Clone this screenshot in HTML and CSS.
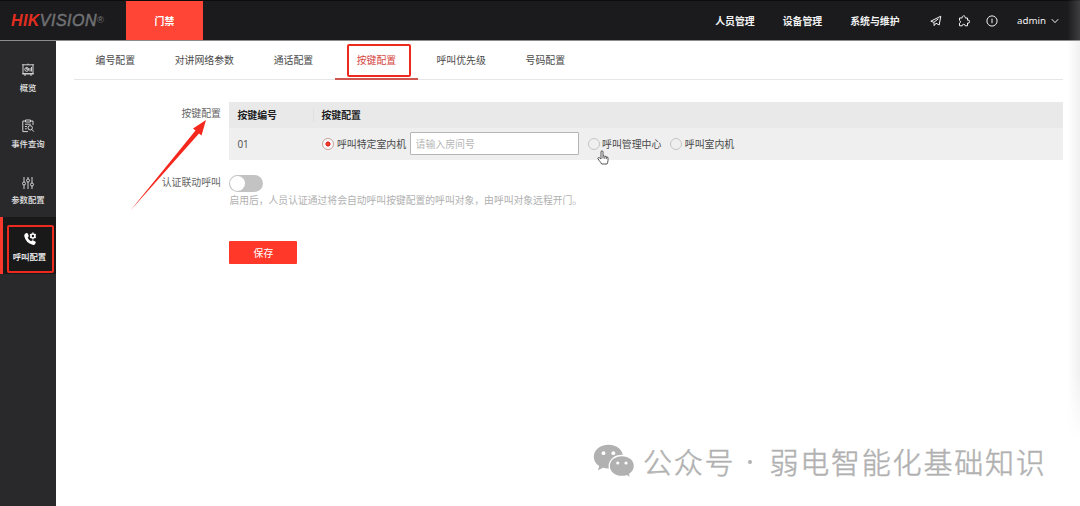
FILE: index.html
```html
<!DOCTYPE html>
<html lang="zh-CN">
<head>
    <meta charset="UTF-8">
    <meta name="viewport" content="width=device-width, initial-scale=1.0">
    <title>按键配置</title>
    <link rel="stylesheet" href="styles.css">
</head>
<body>
    <header class="topbar">
        <div class="logo"><span class="logo-red">HIK</span><span class="logo-grey">VISION</span><sup>®</sup></div>
        <div class="module">门禁</div>
        <nav class="top-nav">
            <a>人员管理</a>
            <a>设备管理</a>
            <a>系统与维护</a>
        </nav>
        <div class="tools">
            <svg viewBox="0 0 12 12"><path d="M.8 6.2 10.8 1.2 9.2 10 6 8.2 4.2 10.6 3.9 7.3Z M3.9 7.3 8.4 3.8"/></svg>
            <svg viewBox="0 0 12 12"><path d="M1.5 3H4.2A1.6 1.6 0 1 1 7.2 3H9.5V5.2A1.5 1.5 0 1 1 9.5 8V10.8H7.2A1.5 1.5 0 0 0 4.2 10.8H1.5V8.2A1.5 1.5 0 0 0 1.5 5.4Z"/></svg>
            <svg viewBox="0 0 12 12"><circle cx="6" cy="6" r="5.1"/><path d="M6 3.6V8.2"/></svg>
        </div>
        <div class="user">admin <svg viewBox="0 0 8 6"><path d="M.8 1.2 4 4.6 7.2 1.2"/></svg></div>
    </header>

    <div class="layout">
        <aside class="sidebar">
            <a class="side-item">
                <svg viewBox="0 0 14 14"><path d="M1 1.8H13M2 1.8V10.8H12V1.8M1 10.8H13M4 11V13M10 11V13M7 .6V1.8M9 5V8.5M10.5 4V8.5"/><circle cx="5.7" cy="6.4" r="1.9"/><path d="M5.7 4.5V6.4H7.6"/></svg>
                <span>概览</span>
            </a>
            <a class="side-item">
                <svg viewBox="0 0 14 14"><path d="M4.5 2H1.8V12.6H7M9.5 2H12V6M4.5 1H9.5V3H4.5ZM4 5.2H9.8M4 7.5H6M4 9.8H5.8"/><circle cx="9.2" cy="8.8" r="2.2"/><path d="M10.8 10.4 12.8 12.6"/></svg>
                <span>事件查询</span>
            </a>
            <a class="side-item">
                <svg viewBox="0 0 14 14"><path d="M3 1V6M3 9V13M7 1V3M7 6V13M11 1V7M11 10V13"/><circle cx="3" cy="7.5" r="1.5"/><circle cx="7" cy="4.5" r="1.5"/><circle cx="11" cy="8.5" r="1.5"/></svg>
                <span>参数配置</span>
            </a>
            <a class="side-item active">
                <svg class="solid" viewBox="0 0 14 14"><path d="M2 1.7 3.5.9Q4.4.8 4.9 1.7L5.7 3.8Q5.8 4.5 5.2 5L4.6 5.6Q5.5 8 8.2 9.2L9 8.5Q9.6 8 10.3 8.4L12.3 9.5Q13 10 12.7 10.8L12 12.2Q11.1 13.2 9.6 12.8Q2.8 10.8 1.3 4.2Q1 2.7 2 1.7Z"/><circle class="gear" cx="9.9" cy="4" r="2"/><path class="teeth" d="M9.9.6V1.6M9.9 6.4V7.4M7 2.3 7.8 2.8M12 5.2 12.8 5.7M7 5.7 7.8 5.2M12 2.8 12.8 2.3"/></svg>
                <span>呼叫配置</span>
                <i class="mark mark-side"></i>
            </a>
        </aside>

        <main class="content">
            <ul class="tabs">
                <li>编号配置</li>
                <li>对讲网络参数</li>
                <li>通话配置</li>
                <li class="active">按键配置<i class="mark mark-tab"></i></li>
                <li>呼叫优先级</li>
                <li>号码配置</li>
            </ul>

            <form class="form">
                <div class="form-row">
                    <label class="form-label">按键配置</label>
                    <div class="key-table">
                        <div class="key-row key-head">
                            <div class="cell-no">按键编号</div>
                            <div class="cell-config">按键配置</div>
                        </div>
                        <div class="key-row">
                            <div class="cell-no">01</div>
                            <div class="cell-config">
                                <span class="radio checked"></span>
                                <span class="radio-text">呼叫特定室内机</span>
                                <input class="room" type="text" placeholder="请输入房间号">
                                <span class="radio">
                                    <svg class="cursor" viewBox="0 0 12 15"><path d="M4 9V2Q4 .8 5 .8T6 2V6Q7.4 5.2 7.8 6.4Q9 5.8 9.4 7Q11 6.4 11 8.2V10.5Q11 12 10 14H4.6Q4 12.5 2.2 10.6L.9 8.6Q.8 7.3 2.2 7.6Z"/><path d="M6 6V8.5M7.8 6.5V8.7M9.4 7V8.9"/></svg>
                                </span>
                                <span class="radio-text">呼叫管理中心</span>
                                <span class="radio"></span>
                                <span class="radio-text">呼叫室内机</span>
                            </div>
                        </div>
                    </div>
                </div>
                <div class="form-row link-row">
                    <label class="form-label">认证联动呼叫</label>
                    <div class="form-field">
                        <span class="switch"></span>
                        <p class="hint">启用后，人员认证通过将会自动呼叫按键配置的呼叫对象，由呼叫对象远程开门。</p>
                    </div>
                </div>
                <button class="save" type="button">保存</button>
            </form>
        </main>
    </div>

    <svg class="arrow" viewBox="0 0 80 94"><path d="M1 92 66.5 11.5 64 9.5 77 1 72.5 16.5 70 14.5Z"/></svg>
    <div class="edge-shade"></div>

    <div class="watermark">
        <svg viewBox="0 0 42 34"><path d="M15.5.8C7 .8.8 6 .8 12.8c0 4 2 7 5.4 9.2L5 26.3l5-2.5q2.6.8 5.5.8C24 24.6 30 19.5 30 12.8S24 .8 15.5.8Z"/><path class="front" d="M29 11.5c-7.500 0-12.800 4.800-12.800 10.600S21.500 32.500 29 32.500q2.300 0 4.500-.7l4.200 2.200-1.100-3.800c3-2 4.800-4.700 4.800-8.100 0-5.800-5-10.600-12.400-10.600Z"/><g class="eyes"><circle cx="10.5" cy="9.2" r="1.9"/><circle cx="20.3" cy="9.2" r="1.9"/><circle cx="24.7" cy="19" r="1.6"/><circle cx="33" cy="19" r="1.6"/></g></svg>
        <span>公众号</span><b></b><span>弱电智能化基础知识</span>
    </div>
</body>
</html>
```
FILE: styles.css
```css
* {
    box-sizing: border-box;
}
body {
    margin: 0;
    height: 506px;
    overflow: hidden;
    position: relative;
    background: #fff;
    color: #4a4a4a;
    font-family: "Open Sans", "Noto Sans CJK SC", sans-serif;
    font-size: 9.9px;
    line-height: 14px;
}
svg {
    display: block;
    fill: none;
    stroke: currentColor;
}

/* top bar */
.topbar {
    display: flex;
    align-items: center;
    height: 41px;
    padding-right: 21px;
    background: #1b1b1d;
    border-top: 1px solid #0c0c0d;
    border-bottom: 1px solid #8d8b8c;
    color: #f2f2f2;
}
.logo {
    display: flex;
    width: 126px;
    padding-left: 11px;
    font: italic bold 16px "Liberation Sans", Arial, sans-serif;
}
.logo-red {
    color: #e22d20;
    letter-spacing: 0.4px;
}
.logo-grey {
    color: #707174;
    font-weight: normal;
    letter-spacing: 0.5px;
    -webkit-text-stroke: 0.5px #707174;
}
.logo sup {
    color: #77787b;
    font-size: 9.5px;
    font-style: normal;
    font-weight: normal;
    line-height: 16px;
    vertical-align: baseline;
}
.module {
    width: 77px;
    height: 39px;
    line-height: 40px;
    text-align: center;
    background: #ff4536;
    color: #fff;
    font-weight: bold;
}
.top-nav {
    display: flex;
    gap: 28px;
    margin-left: auto;
    font-weight: bold;
}
.tools {
    display: flex;
    gap: 16px;
    margin-left: 30.5px;
}
.tools svg {
    width: 12px;
    height: 12px;
}
.user {
    display: flex;
    align-items: center;
    gap: 5px;
    margin-left: 19px;
    font-family: "Noto Sans", sans-serif;
    font-size: 9.7px;
}
.user svg {
    width: 8px;
    height: 6px;
}

/* sidebar */
.layout {
    display: flex;
    height: 465px;
}
.sidebar {
    width: 56px;
    padding-top: 7px;
    background: #29292b;
    color: #e4e4e4;
}
.side-item {
    display: flex;
    flex-direction: column;
    align-items: center;
    position: relative;
    height: 56.4px;
    padding-top: 15px;
    font-size: 8.4px;
    font-weight: 500;
    line-height: 12px;
}
.side-item svg {
    width: 14px;
    height: 14px;
    margin-bottom: 4.6px;
    stroke-width: 0.9;
}
.side-item.active {
    background: #19191a;
    border-left: 3px solid #f8392c;
    color: #fff;
}
.side-item .solid {
    fill: #fff;
    stroke: none;
}
.solid .gear {
    fill: none;
    stroke: #fff;
    stroke-width: 1.6;
}
.solid .teeth {
    stroke: #fff;
    stroke-width: 1.4;
}

/* tabs */
.content {
    flex: 1;
    padding: 0 17px 0 18px;
}
.tabs {
    display: flex;
    height: 39px;
    margin: 0;
    padding: 0 0 0 1.5px;
    list-style: none;
    border-bottom: 1px solid #e6e6e6;
    line-height: 38px;
}
.tabs li {
    position: relative;
    height: 39px;
    padding: 0 20px;
}
.tabs li + li {
    margin-left: -0.3px;
}
.tabs li + li.active {
    margin: 0 -1.5px 0 1.5px;
    padding: 0 22px;
    border-bottom: 2px solid #d0554e;
    color: #d5473f;
}

/* form */
.form {
    padding-top: 22px;
}
.form-row {
    display: flex;
}
.form-label {
    width: 147px;
    margin-right: 8.4px;
    padding-top: 4px;
    text-align: right;
    color: #666;
}
.key-table {
    flex: 1;
    background: #efefef;
}
.key-row {
    display: flex;
    align-items: center;
    height: 32px;
    padding-bottom: 1px;
}
.key-head {
    height: 26px;
    background: #e9e9e9;
    color: #222;
    font-weight: bold;
}
.cell-no {
    width: 85px;
    padding-left: 8px;
}
.key-head .cell-no {
    border-right: 1px solid #e0e0e0;
}
.cell-config {
    display: flex;
    align-items: center;
    padding-left: 7px;
}
.radio {
    position: relative;
    width: 12px;
    height: 12px;
    margin: 0 2.5px 0 1px;
    border: 1px solid #c6c6c6;
    border-radius: 50%;
}
.radio.checked {
    border-color: #c9a29c;
    background: radial-gradient(#e6362b 2.3px, #fafafa 2.9px);
}
.room {
    width: 169px;
    height: 23px;
    margin: 0 8px 0 3.5px;
    padding: 0 5px;
    border: 1px solid #b5b5b5;
    border-radius: 1px;
    background: #fff;
    font: inherit;
}
.room::placeholder {
    color: #b5b5b5;
}
.room ~ .radio-text + .radio {
    margin-left: 9px;
}
.link-row {
    margin-top: 11px;
}
.form-field {
    padding-top: 4px;
}
.switch {
    display: block;
    width: 34px;
    height: 17px;
    padding: 1px;
    border-radius: 9px;
    background: #c3c3c3;
}
.switch::before {
    content: "";
    display: block;
    width: 15px;
    height: 15px;
    border-radius: 50%;
    background: #fff;
}
.hint {
    margin: 1.5px 0 0;
    color: #b0b0b0;
    font-size: 9.8px;
}
.save {
    display: block;
    width: 68px;
    height: 23px;
    margin: 33.5px 0 0 155.4px;
    padding: 0;
    border: 0;
    border-radius: 1px;
    background: #ff3829;
    color: #fff;
    font: inherit;
}

/* overlays */
.mark {
    position: absolute;
    border: 2px solid #ee2a1f;
    border-radius: 2px;
}
.mark-side {
    left: 4px;
    top: 8px;
    width: 47px;
    height: 48px;
}
.mark-tab {
    left: 12px;
    top: 3px;
    width: 64px;
    height: 33px;
}
.cursor {
    position: absolute;
    left: 8px;
    top: 11px;
    width: 12px;
    height: 15px;
    fill: #fff;
    stroke: #555;
}
.arrow {
    position: absolute;
    left: 129px;
    top: 119px;
    width: 80px;
    height: 94px;
    fill: #f5281e;
    stroke: none;
}
.edge-shade {
    position: absolute;
    right: 0;
    top: 0;
    width: 13px;
    height: 440px;
    background: linear-gradient(to right, rgba(190, 190, 190, 0), rgba(190, 190, 190, 0.22));
    -webkit-mask-image: linear-gradient(to bottom, #000 85%, transparent);
    mask-image: linear-gradient(to bottom, #000 85%, transparent);
}
.watermark {
    position: absolute;
    left: 593px;
    top: 443px;
    display: flex;
    align-items: center;
    color: #b1b1b1;
    font-family: "Noto Sans CJK SC", sans-serif;
    font-size: 29px;
    font-weight: 300;
    letter-spacing: 1.8px;
    line-height: 36px;
    -webkit-text-stroke: 0.5px #b1b1b1;
}
.watermark svg {
    width: 42px;
    height: 34px;
    margin-right: 8px;
    fill: #b1b1b1;
    stroke: none;
}
.watermark .front {
    stroke: #fff;
    stroke-width: 1.3;
}
.watermark .eyes {
    fill: #fff;
}
.watermark b {
    width: 4px;
    height: 4px;
    margin: 2px 17px 0 13px;
    border-radius: 50%;
    background: #b1b1b1;
}
```
